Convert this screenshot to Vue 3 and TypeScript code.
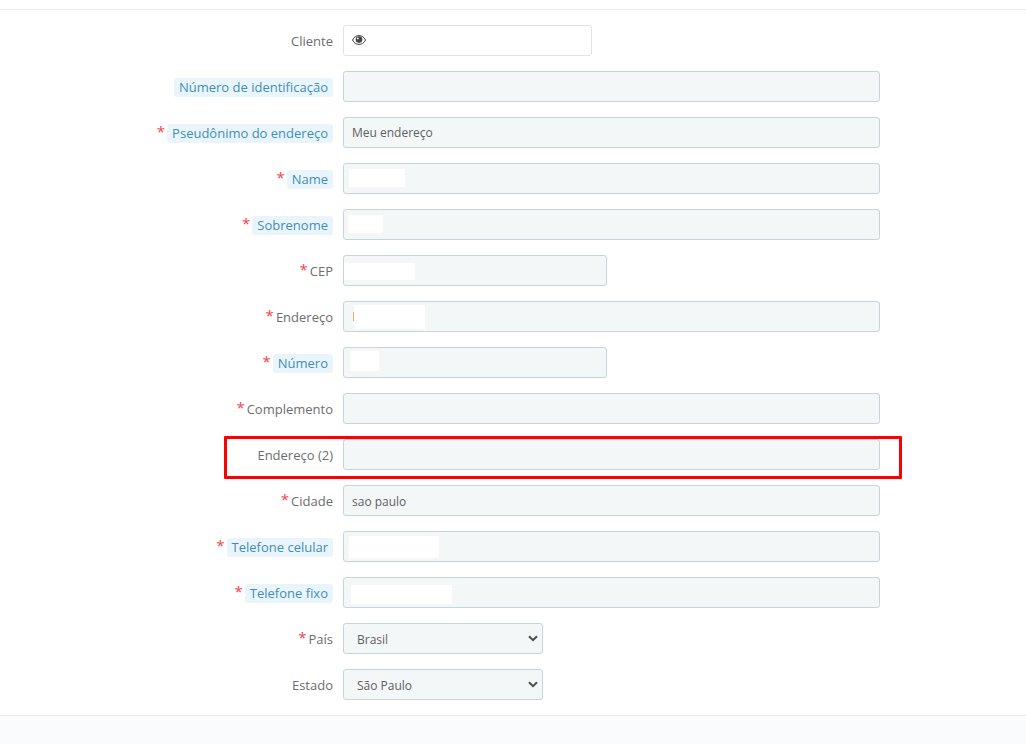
<script setup lang="ts">
interface Row {
  label: string
  required?: boolean
  hint?: boolean
  value?: string
  lowered?: boolean
  size: 'full' | 'half'
  mask?: { left: number; top: number; width: number; height: number }
  cursor?: boolean
  marked?: boolean
}

const rows: Row[] = [
  { label: 'Número de identificação', hint: true, size: 'full' },
  { label: 'Pseudônimo do endereço', required: true, hint: true, value: 'Meu endereço', size: 'full' },
  { label: 'Name', required: true, hint: true, size: 'full', mask: { left: 5, top: 5, width: 56, height: 18 } },
  { label: 'Sobrenome', required: true, hint: true, size: 'full', mask: { left: 4, top: 5, width: 35, height: 18 } },
  { label: 'CEP', required: true, size: 'half', mask: { left: 0, top: 7, width: 71, height: 17 } },
  { label: 'Endereço', required: true, size: 'full', cursor: true, mask: { left: 10, top: 3, width: 71, height: 24 } },
  { label: 'Número', required: true, hint: true, size: 'half', mask: { left: 6, top: 3, width: 29, height: 20 } },
  { label: 'Complemento', required: true, size: 'full' },
  { label: 'Endereço (2)', size: 'full', marked: true },
  { label: 'Cidade', required: true, value: 'sao paulo', lowered: true, size: 'full' },
  { label: 'Telefone celular', required: true, hint: true, size: 'full', mask: { left: 5, top: 4, width: 90, height: 22 } },
  { label: 'Telefone fixo', required: true, hint: true, size: 'full', mask: { left: 7, top: 7, width: 101, height: 19 } },
]
</script>

<template>
  <div class="page">
    <main class="form">
      <div class="row">
        <label class="label">Cliente</label>
        <div class="client">
          <svg class="eye" width="14" height="10" viewBox="0 0 14 10" aria-hidden="true">
            <path d="M0.5 5C2 2 4.4 0.6 7 0.6S12 2 13.5 5C12 8 9.6 9.4 7 9.4S2 8 0.5 5Z" fill="none" stroke="#3f3f3f" stroke-width="1" />
            <circle cx="7" cy="4.6" r="3.3" fill="#444" />
            <circle cx="5.8" cy="3.4" r="0.9" fill="#fff" />
          </svg>
        </div>
      </div>

      <div v-for="row in rows" :key="row.label" class="row">
        <label class="label">
          <span v-if="row.required" class="star">*</span>
          <span :class="{ hint: row.hint }">{{ row.label }}</span>
        </label>
        <div class="input" :class="row.size">
          <span v-if="row.value" :class="{ lowered: row.lowered }">{{ row.value }}</span>
          <span v-if="row.cursor" class="cursor"></span>
          <span
            v-if="row.mask"
            class="mask"
            :style="{
              left: row.mask.left + 'px',
              top: row.mask.top + 'px',
              width: row.mask.width + 'px',
              height: row.mask.height + 'px',
            }"
          ></span>
        </div>
        <span v-if="row.marked" class="marker"></span>
      </div>

      <div class="row">
        <label class="label"><span class="star">*</span><span>País</span></label>
        <div class="select">
          <span class="option">Brasil</span>
          <svg width="10" height="7" viewBox="0 0 10 7" aria-hidden="true">
            <path d="M1 1.2 5 5.2 9 1.2" fill="none" stroke="#4d4d4d" stroke-width="2" />
          </svg>
        </div>
      </div>
      <div class="row">
        <label class="label">Estado</label>
        <div class="select">
          <span class="option">São Paulo</span>
          <svg width="10" height="7" viewBox="0 0 10 7" aria-hidden="true">
            <path d="M1 1.2 5 5.2 9 1.2" fill="none" stroke="#4d4d4d" stroke-width="2" />
          </svg>
        </div>
      </div>
    </main>
    <footer class="footer"></footer>
  </div>
</template>

<style>
html,
body {
  margin: 0;
  background: #fff;
}
</style>

<style scoped>
.page {
  width: 1026px;
  height: 744px;
  overflow: hidden;
  display: flex;
  flex-direction: column;
  font-family: "Open Sans", "Liberation Sans", sans-serif;
  font-size: 13px;
  color: #6c868e;
  background: #fff;
}

.form {
  height: 690px;
  box-sizing: content-box;
  padding-top: 15px;
  border-top: 1px solid #eaecee;
  margin-top: 9px;
  display: flex;
  flex-direction: column;
  gap: 15px;
}

.row {
  position: relative;
  display: flex;
  align-items: center;
  gap: 10px;
  height: 31px;
}

.label {
  width: 333px;
  flex: none;
  display: flex;
  justify-content: flex-end;
  align-items: center;
  gap: 2px;
  color: #6d6d6d;
}

.star {
  color: #f4424a;
  font-size: 15px;
  line-height: 13px;
  position: relative;
  top: -1px;
}

.hint {
  position: relative;
  top: 1px;
  padding: 0 5px;
  line-height: 19px;
  color: #3f8fb5;
  background: #eaf5fb;
  border-radius: 3px;
}

.client,
.input,
.select {
  box-sizing: border-box;
  height: 31px;
  border-radius: 3px;
  font-size: 12px;
  color: #5f5f5f;
}

.client {
  width: 249px;
  display: flex;
  align-items: center;
  padding-left: 8px;
  background: #fff;
  border: 1px solid #dfe3e5;
}

.eye {
  position: relative;
  top: -1px;
}

.input {
  position: relative;
  display: flex;
  align-items: center;
  padding-left: 8px;
  background: #f4f7f8;
  border: 1px solid #c7d4da;
}

.input.full {
  width: 537px;
}

.input.half {
  width: 264px;
}

.lowered {
  padding-top: 2px;
}

.mask {
  position: absolute;
  background: #fff;
}

.cursor {
  position: absolute;
  left: 9px;
  top: 10px;
  width: 1px;
  height: 9px;
  background: #dcae73;
}

.select {
  width: 200px;
  display: flex;
  align-items: center;
  justify-content: space-between;
  padding: 0 4px 0 13px;
  background: #f4f7f8;
  border: 1px solid #c7d4da;
}

.option {
  padding-top: 2px;
}

.marker {
  position: absolute;
  left: 224px;
  top: -3px;
  width: 678px;
  height: 43px;
  box-sizing: border-box;
  border: 3px solid #fe0000;
  border-radius: 1px;
  pointer-events: none;
}

.footer {
  flex: 1;
  background: #fafbfc;
  border-top: 1px solid #e8eaec;
}
</style>
